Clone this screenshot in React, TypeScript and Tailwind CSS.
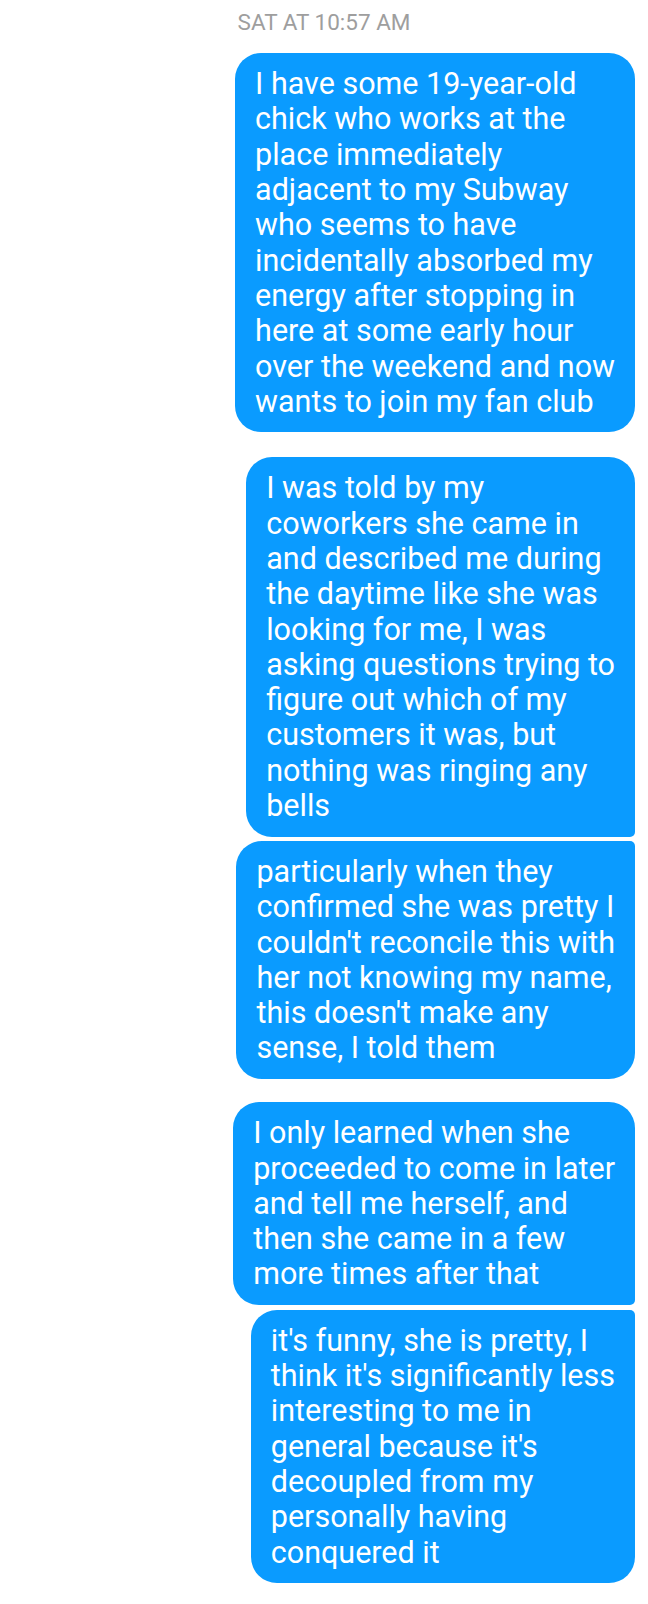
const messages: { lines: string[]; corners: string; gap: string }[] = [
  {
    lines: [
      "I have some 19-year-old",
      "chick who works at the",
      "place immediately",
      "adjacent to my Subway",
      "who seems to have",
      "incidentally absorbed my",
      "energy after stopping in",
      "here at some early hour",
      "over the weekend and now",
      "wants to join my fan club",
    ],
    corners: "rounded-[26px]",
    gap: "mt-0",
  },
  {
    lines: [
      "I was told by my",
      "coworkers she came in",
      "and described me during",
      "the daytime like she was",
      "looking for me, I was",
      "asking questions trying to",
      "figure out which of my",
      "customers it was, but",
      "nothing was ringing any",
      "bells",
    ],
    corners: "rounded-[26px] rounded-br-[5px]",
    gap: "mt-[25px]",
  },
  {
    lines: [
      "particularly when they",
      "confirmed she was pretty I",
      "couldn't reconcile this with",
      "her not knowing my name,",
      "this doesn't make any",
      "sense, I told them",
    ],
    corners: "rounded-[26px] rounded-tr-[5px]",
    gap: "mt-[4.3px]",
  },
  {
    lines: [
      "I only learned when she",
      "proceeded to come in later",
      "and tell me herself, and",
      "then she came in a few",
      "more times after that",
    ],
    corners: "rounded-[26px] rounded-br-[5px]",
    gap: "mt-[23.3px]",
  },
  {
    lines: [
      "it's funny, she is pretty, I",
      "think it's significantly less",
      "interesting to me in",
      "general because it's",
      "decoupled from my",
      "personally having",
      "conquered it",
    ],
    corners: "rounded-[26px] rounded-tr-[5px]",
    gap: "mt-[4.7px]",
  },
];

export default function App() {
  return (
    <div className="min-h-[1604px] w-[648px] bg-white pb-[20px] font-['Roboto',sans-serif]">
      <div className="pt-[8px] text-center text-[22.5px] leading-[28px] text-[#9e9e9e]">
        SAT AT 10:57 AM
      </div>
      <div className="mt-[17px] flex flex-col items-end pr-[13px]">
        {messages.map((m, i) => (
          <div
            key={i}
            className={`${m.gap} ${m.corners} bg-[#0a9bff] px-[20px] py-[13.15px] text-[30.5px] leading-[35.3px] whitespace-nowrap text-white`}
          >
            {m.lines.map((l, j) => (
              <div key={j}>{l}</div>
            ))}
          </div>
        ))}
      </div>
    </div>
  );
}
